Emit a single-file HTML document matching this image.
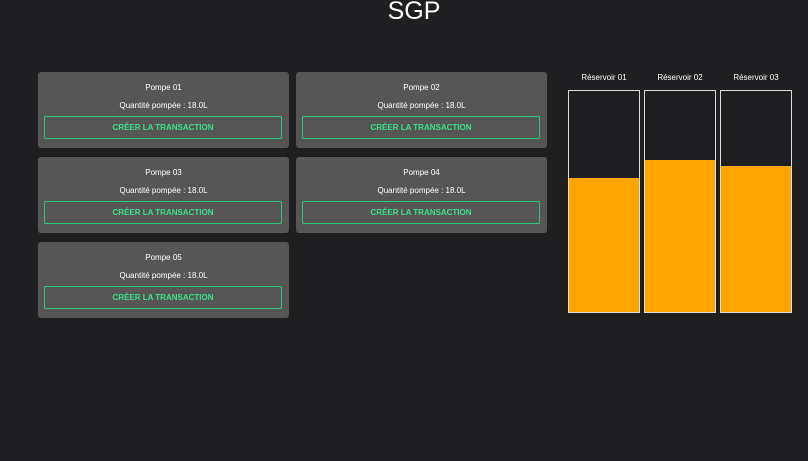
<!DOCTYPE html>
<html><head><style>
body{margin:0;width:808px;height:461px;background:#1f1f22;font-family:"Liberation Sans",sans-serif;position:relative;overflow:hidden;color:#fff}
.t{position:absolute;top:-3px;left:0;width:828px;text-align:center;font-size:25px;font-weight:300;color:#fff}
.c{position:absolute;width:251px;height:76px;background:#565656;border-radius:3px;text-align:center;font-size:8px}
.c .n{position:absolute;top:11px;width:100%}
.c .q{position:absolute;top:29px;width:100%}
.c .b{position:absolute;left:6px;top:44px;width:236px;height:21px;border:1px solid #2fc67a;border-radius:2px;color:#3ee08a;font-size:8px;font-weight:bold;line-height:22px}
.r{position:absolute;top:90px;width:70px;height:221px;border:1px solid #ddd;background:#1f1f22}
.r div{position:absolute;left:0;right:0;bottom:0;background:#ffa500}
.l{position:absolute;top:73px;width:74px;text-align:center;font-size:8px}
</style></head><body>
<div class="t">SGP</div>
<div class="c" style="left:38px;top:72px"><div class="n">Pompe 01</div><div class="q">Quantité pompée : 18.0L</div><div class="b">CRÉER LA TRANSACTION</div></div>
<div class="c" style="left:296px;top:72px"><div class="n">Pompe 02</div><div class="q">Quantité pompée : 18.0L</div><div class="b">CRÉER LA TRANSACTION</div></div>
<div class="c" style="left:38px;top:157px"><div class="n">Pompe 03</div><div class="q">Quantité pompée : 18.0L</div><div class="b">CRÉER LA TRANSACTION</div></div>
<div class="c" style="left:296px;top:157px"><div class="n">Pompe 04</div><div class="q">Quantité pompée : 18.0L</div><div class="b">CRÉER LA TRANSACTION</div></div>
<div class="c" style="left:38px;top:242px"><div class="n">Pompe 05</div><div class="q">Quantité pompée : 18.0L</div><div class="b">CRÉER LA TRANSACTION</div></div>
<div class="l" style="left:567px">Réservoir 01</div>
<div class="l" style="left:643px">Réservoir 02</div>
<div class="l" style="left:719px">Réservoir 03</div>
<div class="r" style="left:568px"><div style="height:134px"></div></div>
<div class="r" style="left:644px"><div style="height:152px"></div></div>
<div class="r" style="left:720px"><div style="height:146px"></div></div>
</body></html>
